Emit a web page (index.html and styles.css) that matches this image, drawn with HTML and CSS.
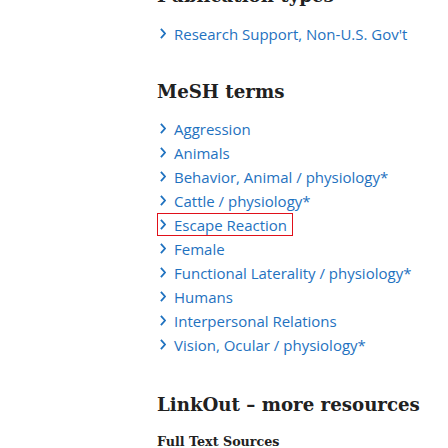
FILE: index.html
```html
<!DOCTYPE html>
<html>
<head>
<meta charset="utf-8">
<link rel="stylesheet" href="styles.css">
</head>
<body>
<main class="content">
  <h2 class="heading cut">Publication types</h2>
  <ul class="terms first">
    <li><a href="#"><svg class="chev" viewBox="0 0 6 11"><polyline points="0.9,0.9 5,5.5 0.9,10.1"/></svg>Research Support, Non-U.S. Gov't</a></li>
  </ul>
  <h2 class="heading">MeSH terms</h2>
  <ul class="terms">
    <li><a href="#"><svg class="chev" viewBox="0 0 6 11"><polyline points="0.9,0.9 5,5.5 0.9,10.1"/></svg>Aggression</a></li>
    <li><a href="#"><svg class="chev" viewBox="0 0 6 11"><polyline points="0.9,0.9 5,5.5 0.9,10.1"/></svg>Animals</a></li>
    <li><a href="#"><svg class="chev" viewBox="0 0 6 11"><polyline points="0.9,0.9 5,5.5 0.9,10.1"/></svg>Behavior, Animal / physiology*</a></li>
    <li><a href="#"><svg class="chev" viewBox="0 0 6 11"><polyline points="0.9,0.9 5,5.5 0.9,10.1"/></svg>Cattle / physiology*</a></li>
    <li><a href="#" class="marked"><svg class="chev" viewBox="0 0 6 11"><polyline points="0.9,0.9 5,5.5 0.9,10.1"/></svg>Escape Reaction</a></li>
    <li><a href="#"><svg class="chev" viewBox="0 0 6 11"><polyline points="0.9,0.9 5,5.5 0.9,10.1"/></svg>Female</a></li>
    <li><a href="#"><svg class="chev" viewBox="0 0 6 11"><polyline points="0.9,0.9 5,5.5 0.9,10.1"/></svg>Functional Laterality / physiology*</a></li>
    <li><a href="#"><svg class="chev" viewBox="0 0 6 11"><polyline points="0.9,0.9 5,5.5 0.9,10.1"/></svg>Humans</a></li>
    <li><a href="#"><svg class="chev" viewBox="0 0 6 11"><polyline points="0.9,0.9 5,5.5 0.9,10.1"/></svg>Interpersonal Relations</a></li>
    <li><a href="#"><svg class="chev" viewBox="0 0 6 11"><polyline points="0.9,0.9 5,5.5 0.9,10.1"/></svg>Vision, Ocular / physiology*</a></li>
  </ul>
  <h2 class="heading linkout">LinkOut – more resources</h2>
  <h3 class="subheading">Full Text Sources</h3>
</main>
</body>
</html>
```
FILE: styles.css
```css
html, body {
  margin: 0;
  padding: 0;
  background: #ffffff;
  overflow: hidden;
}
.content {
  padding-left: 157px;
  margin-top: -17px;
}
.heading {
  font-family: "DejaVu Serif", serif;
  font-weight: bold;
  font-size: 18.2px;
  color: #212121;
  margin: 0 0 11px;
  line-height: 26px;
}
.heading.linkout {
  margin-top: 36px;
  margin-bottom: 0;
}
.terms {
  list-style: none;
  margin: 0;
  padding: 0;
  font-family: "Open Sans", sans-serif;
  font-weight: 400;
  font-size: 15px;
}
.terms.first {
  margin: 12px 0 34px;
}
.terms li {
  line-height: 24px;
  height: 24px;
}
.terms a {
  color: #1f72c0;
  text-decoration: none;
  display: inline-flex;
  align-items: center;
  padding-left: 2px;
  padding-right: 5px;
  border: 1px solid transparent;
  box-sizing: border-box;
  height: 23px;
}
.terms a.marked {
  border: 1.5px solid #e0101a;
}
.chev {
  width: 6px;
  height: 11px;
  margin-right: 8px;
  flex: none;
  fill: none;
  stroke: #1f72c0;
  stroke-width: 1.8;
}
.subheading {
  font-family: "DejaVu Serif", serif;
  font-weight: bold;
  font-size: 12.7px;
  color: #212121;
  margin: 16px 0 0;
}
```
